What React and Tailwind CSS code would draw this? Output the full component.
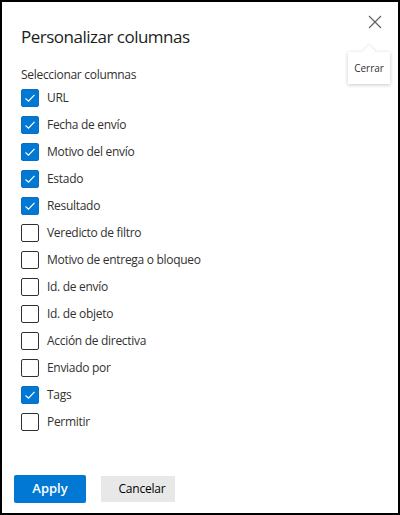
import React, { useState } from 'react';

const columnas = [
  { label: 'URL', checked: true },
  { label: 'Fecha de envío', checked: true },
  { label: 'Motivo del envío', checked: true },
  { label: 'Estado', checked: true },
  { label: 'Resultado', checked: true },
  { label: 'Veredicto de filtro', checked: false },
  { label: 'Motivo de entrega o bloqueo', checked: false },
  { label: 'Id. de envío', checked: false },
  { label: 'Id. de objeto', checked: false },
  { label: 'Acción de directiva', checked: false },
  { label: 'Enviado por', checked: false },
  { label: 'Tags', checked: true },
  { label: 'Permitir', checked: false },
];

const Check = ({ checked }) => (
  <span
    className={`w-[18px] h-[18px] rounded-[2px] flex items-center justify-center shrink-0 ${
      checked ? 'bg-[#0078d4] border border-[#106ebe]' : 'bg-white border border-[#323130]'
    }`}
  >
    {checked && (
      <svg width="12" height="12" viewBox="0 0 12 12" fill="none">
        <path d="M1.5 6.5 L4.5 9.2 L10.5 2.8" stroke="white" strokeWidth="1.2" />
      </svg>
    )}
  </span>
);

const App = () => {
  const [items, setItems] = useState(columnas);

  const toggle = (i) => {
    setItems(items.map((it, idx) => (idx === i ? { ...it, checked: !it.checked } : it)));
  };

  return (
    <div className="w-[400px] h-[515px] bg-white border-2 border-black relative flex flex-col font-['Open_Sans',sans-serif] text-[#323130]">
      {/* boton cerrar + tooltip */}
      <button className="absolute left-[366px] top-[13px] text-[#605e5c]">
        <svg width="14" height="14" viewBox="0 0 14 14">
          <path d="M1 1 L13 13 M13 1 L1 13" stroke="currentColor" strokeWidth="1.1" />
        </svg>
      </button>
      <div className="absolute left-[346px] top-[50px] w-[42px] h-[32px] bg-white shadow-[0_1px_4px_rgba(0,0,0,0.22)] flex items-center justify-center text-[10px] text-[#323130]">
        <span className="absolute -top-[5px] left-[16px] w-[10px] h-[10px] bg-white rotate-45 shadow-[-1px_-1px_2px_rgba(0,0,0,0.08)]"></span>
        <span className="relative">Cerrar</span>
      </div>

      <div className="pl-[19px] pt-[23px]">
        <h1 className="text-[17px] leading-[24px] text-[#201f1e] tracking-[-0.5px]">Personalizar columnas</h1>
        <div className="mt-[18px] text-[12px] leading-[16px] tracking-[-0.3px]">Seleccionar columnas</div>
        <div className="mt-[6px] flex flex-col">
          {items.map((it, i) => (
            <label
              key={it.label}
              className="h-[27px] flex items-start gap-[8px] cursor-pointer"
              onClick={() => toggle(i)}
            >
              <Check checked={it.checked} />
              <span className="text-[12px] leading-[18px] tracking-[-0.3px]">{it.label}</span>
            </label>
          ))}
        </div>
      </div>

      <div className="mt-auto mb-[10px] pl-[12px] flex items-center gap-[15px]">
        <button className="w-[72px] h-[28px] bg-[#0078d4] rounded-[2px] text-white font-semibold text-[13px]">
          Apply
        </button>
        <button className="w-[74px] h-[26px] bg-[#e8e8e8] text-[12px] text-black pl-[8px] tracking-[-0.2px]">
          Cancelar
        </button>
      </div>
    </div>
  );
};

export default App;
